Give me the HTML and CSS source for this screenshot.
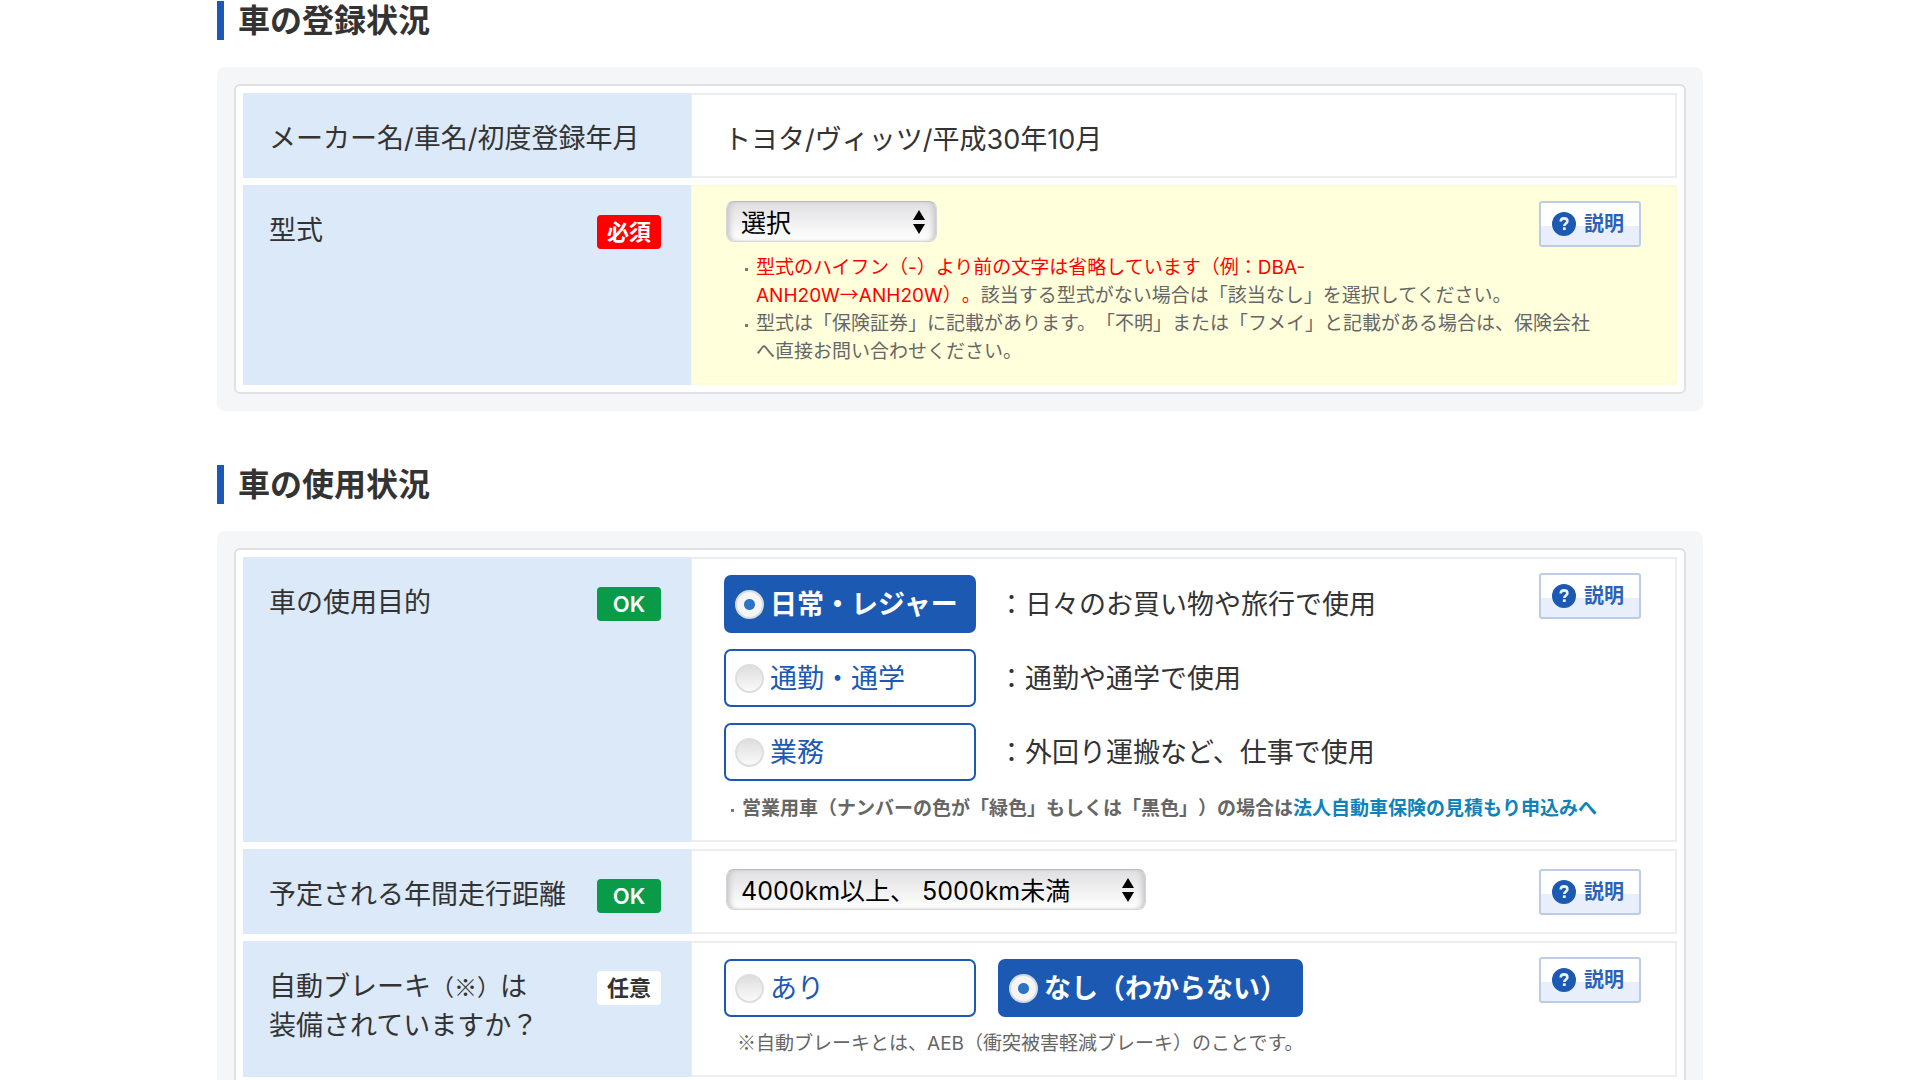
FILE: index.html
```
<!DOCTYPE html>
<html lang="ja">
<head>
<meta charset="utf-8">
<meta name="viewport" content="width=device-width, initial-scale=1">
<title>自動車保険 お見積もり</title>
<link rel="stylesheet" href="styles.css">
</head>
<body>
<svg class="sprite" aria-hidden="true">
  <symbol id="icon-help" viewBox="0 0 24 24">
    <circle cx="12" cy="12" r="12" fill="#1b59b3"/>
    <path d="M8.700 9.500C8.800 7.400 10.100 6.400 12 6.400S15.400 7.500 15.400 9.200C15.400 11.400 12.300 11.500 12.300 14" fill="none" stroke="#eef3fb" stroke-width="2.600"/>
    <rect x="10.900" y="15.300" width="2.800" height="2.700" fill="#eef3fb"/>
  </symbol>
  <symbol id="icon-updown" viewBox="0 0 12 24">
    <path d="M6 0 12 10H0zM6 24 0 14h12z"/>
  </symbol>
</svg>
<form class="page">
  <section class="section">
    <h2 class="section-title">車の登録状況</h2>
    <div class="panel">
      <div class="rows">
        <div class="row">
          <div class="head"><span class="head-text">メーカー名/車名/初度登録年月</span></div>
          <div class="value value--text">トヨタ/ヴィッツ/平成30年10月</div>
        </div>
        <div class="row">
          <div class="head">
            <label class="head-text" for="model">型式</label>
            <span class="badge badge--required">必須</span>
          </div>
          <div class="value value--active">
            <button class="help" type="button"><svg class="help-icon" aria-hidden="true"><use href="#icon-help"/></svg>説明</button>
            <div class="picker picker--short">
              <select class="select" id="model"><option>選択</option></select>
              <svg class="picker-arrows" aria-hidden="true"><use href="#icon-updown"/></svg>
            </div>
            <ul class="notes">
              <li><span class="warn">型式のハイフン（-）より前の文字は省略しています（例：DBA-<br>ANH20W<span class="sign">→</span>ANH20W）。</span>該当する型式がない場合は「該当なし」を選択してください。</li>
              <li>型式は「保険証券」に記載があります。「不明」または「フメイ」と記載がある場合は、保険会社へ直接お問い合わせください。</li>
            </ul>
          </div>
        </div>
      </div>
    </div>
  </section>

  <section class="section">
    <h2 class="section-title">車の使用状況</h2>
    <div class="panel">
      <div class="rows">
        <div class="row">
          <div class="head">
            <span class="head-text" id="purpose">車の使用目的</span>
            <span class="badge badge--ok">OK</span>
          </div>
          <div class="value">
            <button class="help" type="button"><svg class="help-icon" aria-hidden="true"><use href="#icon-help"/></svg>説明</button>
            <div class="choices" role="radiogroup" aria-labelledby="purpose">
              <div class="choice-line">
                <label class="choice"><input class="radio" type="radio" name="purpose" checked>日常・レジャー</label>
                <span>：日々のお買い物や旅行で使用</span>
              </div>
              <div class="choice-line">
                <label class="choice"><input class="radio" type="radio" name="purpose">通勤・通学</label>
                <span>：通勤や通学で使用</span>
              </div>
              <div class="choice-line">
                <label class="choice"><input class="radio" type="radio" name="purpose">業務</label>
                <span>：外回り運搬など、仕事で使用</span>
              </div>
            </div>
            <ul class="notes notes--strong">
              <li>営業用車（ナンバーの色が「緑色」もしくは「黒色」）の場合は<a class="link" href="#">法人自動車保険の見積もり申込みへ</a></li>
            </ul>
          </div>
        </div>
        <div class="row">
          <div class="head">
            <label class="head-text" for="distance">予定される年間走行距離</label>
            <span class="badge badge--ok">OK</span>
          </div>
          <div class="value value--single">
            <button class="help" type="button"><svg class="help-icon" aria-hidden="true"><use href="#icon-help"/></svg>説明</button>
            <div class="picker picker--long">
              <select class="select" id="distance"><option>4000km以上、 5000km未満</option></select>
              <svg class="picker-arrows" aria-hidden="true"><use href="#icon-updown"/></svg>
            </div>
          </div>
        </div>
        <div class="row">
          <div class="head">
            <span class="head-text" id="brake">自動ブレーキ<span class="sign sign--small">（※）</span>は<br>装備されていますか？</span>
            <span class="badge badge--optional">任意</span>
          </div>
          <div class="value">
            <button class="help" type="button"><svg class="help-icon" aria-hidden="true"><use href="#icon-help"/></svg>説明</button>
            <div class="choices" role="radiogroup" aria-labelledby="brake">
              <div class="choice-line">
                <label class="choice"><input class="radio" type="radio" name="brake">あり</label>
                <label class="choice"><input class="radio" type="radio" name="brake" checked>なし（わからない）</label>
              </div>
            </div>
            <p class="footnote"><span class="sign">※</span>自動ブレーキとは、AEB（衝突被害軽減ブレーキ）のことです。</p>
          </div>
        </div>
      </div>
    </div>
  </section>
</form>
</body>
</html>
```
FILE: styles.css
```
*,
*::before {
  box-sizing: border-box;
}

body {
  margin: 0;
  background: #fff;
  color: #333;
  font-family: Inter, "Noto Sans CJK JP", sans-serif;
  font-size: 27px;
  line-height: 39px;
  text-spacing-trim: space-all;
}

/* Symbols that need their full-width Japanese form */
.sign {
  font-family: "Noto Sans CJK JP", sans-serif;
  line-height: 1;
}

.sign--small {
  font-size: 23px;
}

.sprite {
  position: absolute;
  width: 0;
  height: 0;
}

.page {
  max-width: 1486px;
  margin: 0 auto;
  padding-top: 1px;
}

.section {
  margin-bottom: 54px;
}

.section-title {
  margin: 0 0 27px;
  padding-left: 14px;
  border-left: 7px solid #1b59b3;
  font-size: 32px;
  line-height: 39px;
  font-weight: 700;
}

.panel {
  padding: 17px;
  border-radius: 8px;
  background: #f5f6f7;
}

.rows {
  display: flex;
  flex-direction: column;
  gap: 7px;
  padding: 7px;
  border: 2px solid #dfe1e5;
  border-radius: 6px;
  background: #fff;
}

.row {
  display: grid;
  grid-template-columns: 448px 1fr;
}

/* Left column: item name and status badge */
.head {
  display: flex;
  justify-content: space-between;
  align-items: flex-start;
  padding: 26px 30px 20px 26px;
  background: #dce9f8;
}

.badge {
  flex: none;
  width: 64px;
  margin-top: 4px;
  border-radius: 4px;
  font-size: 22px;
  line-height: 34px;
  font-weight: 700;
  text-align: center;
}

.badge--required {
  background: #f00;
  color: #fff;
}

.badge--ok {
  background: #0a9b48;
  color: #fff;
  font-weight: 600;
}

.badge--optional {
  background: #fff;
}

/* Right column: the answer */
.value {
  padding: 14px 34px 17px 32px;
  border: 2px solid #eee;
  border-left: 1px solid #e4edf8;
}

.value--text {
  padding-top: 25px;
}

.value--single {
  padding-top: 18px;
  padding-bottom: 16px;
}

.value--active {
  border-color: #fbfbd8;
  background: #ffffdc;
}

.help {
  float: right;
  display: flex;
  align-items: center;
  gap: 8px;
  width: 102px;
  height: 46px;
  padding: 0 0 0 11px;
  border: 2px solid #bdcce6;
  border-radius: 3px;
  background: linear-gradient(#fff 54%, #e8effa 54%);
  color: #2a62b5;
  font: inherit;
  font-size: 20px;
  line-height: 28px;
  font-weight: 700;
}

.help-icon {
  flex: none;
  width: 24px;
  height: 24px;
}

.picker {
  position: relative;
  margin-left: 2px;
}

.picker--short {
  width: 211px;
}

.picker--long {
  width: 420px;
}

.select {
  display: block;
  width: 100%;
  height: 41px;
  padding: 2px 40px 0 14px;
  border: 1px solid #d6d6d8;
  border-top-color: #b9b9bc;
  border-radius: 8px;
  background: linear-gradient(#e0e0e2, #fff);
  box-shadow: inset 5px 0 5px -2px #c9c9cd, inset -5px 0 5px -2px #c9c9cd;
  color: #000;
  font: inherit;
  font-size: 25px;
  appearance: none;
}

.picker-arrows {
  position: absolute;
  top: 9px;
  right: 12px;
  width: 12px;
  height: 24px;
  pointer-events: none;
}

.choices {
  display: flex;
  flex-direction: column;
  gap: 16px;
  padding-top: 2px;
}

.choice-line {
  display: flex;
  align-items: center;
  gap: 22px;
}

.choice {
  display: flex;
  align-items: center;
  gap: 6px;
  min-width: 252px;
  height: 58px;
  padding: 0 14px 0 9px;
  border: 2px solid #1b59b3;
  border-radius: 7px;
  color: #1b59b3;
}

.choice:has(:checked) {
  background: #1b59b3;
  color: #fff;
  font-weight: 700;
}

.radio {
  flex: none;
  width: 29px;
  height: 29px;
  margin: 0;
  border: 2px solid #dedede;
  border-radius: 50%;
  background: linear-gradient(#dedede, #fafafa);
  appearance: none;
}

.radio:checked {
  border-color: #d5dbe5;
  background: radial-gradient(circle, #2d74c4 0 5px, #f5f5f5 6px);
}

.notes {
  margin: 12px 0 0;
  padding: 0 32px;
  color: #666;
  font-size: 19px;
  line-height: 28px;
  list-style: none;
}

.notes li::before {
  content: "";
  float: left;
  width: 3px;
  height: 3px;
  margin: 14px 0 0 -11px;
  background: #777;
}

.notes--strong {
  margin-top: 14px;
  padding: 0 0 0 18px;
  font-weight: 700;
}

.warn {
  color: #f00;
}

.link {
  color: #0f83b9;
  text-decoration: none;
}

.footnote {
  margin: 13px 0 0;
  padding-left: 13px;
  color: #666;
  font-size: 19px;
  line-height: 28px;
}
```
